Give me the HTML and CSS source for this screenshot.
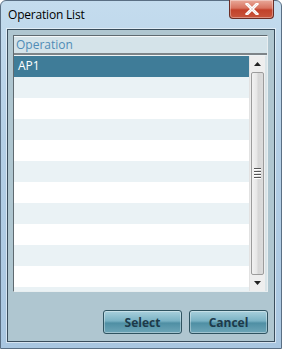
FILE: index.html
```html
<!DOCTYPE html>
<html>
<head>
<meta charset="utf-8">
<link rel="stylesheet" href="styles.css">
</head>
<body>
<div class="window">
  <div class="titlebar">
    <span class="title">Operation List</span>
    <div class="close">
      <svg width="16" height="12" viewBox="0 0 16 12"><path d="M3 1 L13 11 M13 1 L3 11" stroke="#fff" stroke-width="3" stroke-linecap="square" fill="none"/><path d="M3 1 L13 11 M13 1 L3 11" stroke="#6a2a20" stroke-width="0.5" fill="none" opacity="0.3"/></svg>
    </div>
  </div>
  <div class="client">
    <div class="list">
      <div class="header">Operation</div>
      <div class="body">
        <div class="rows">
          <div class="row sel">AP1</div>
          <div class="row alt"></div>
          <div class="row"></div>
          <div class="row alt"></div>
          <div class="row"></div>
          <div class="row alt"></div>
          <div class="row"></div>
          <div class="row alt"></div>
          <div class="row"></div>
          <div class="row alt"></div>
          <div class="row"></div>
          <div class="row alt"></div>
        </div>
        <div class="scrollbar">
          <div class="arrow">
            <svg width="7" height="4" viewBox="0 0 7 4"><path d="M0 4 L3.5 0 L7 4 Z" fill="#222"/></svg>
          </div>
          <div class="thumb">
            <div class="grip"><span></span><span></span><span></span><span></span></div>
          </div>
          <div class="arrow">
            <svg width="7" height="4" viewBox="0 0 7 4"><path d="M0 0 L3.5 4 L7 0 Z" fill="#222"/></svg>
          </div>
        </div>
      </div>
    </div>
    <div class="buttons">
      <button class="btn">Select</button>
      <button class="btn">Cancel</button>
    </div>
  </div>
</div>
</body>
</html>
```

FILE: styles.css
```css
html, body {
  margin: 0;
  padding: 0;
  background: #ffffff;
}
.window {
  width: 282px;
  height: 349px;
  box-sizing: border-box;
  border: 1px solid #5a6f84;
  border-radius: 6px 6px 0 0;
  background: linear-gradient(180deg, #c4dcee 0%, #b4cfe6 40%, #a9c6e0 100%);
  display: flex;
  flex-direction: column;
  font-family: "Open Sans", "Noto Sans", sans-serif;
}
.titlebar {
  height: 28px;
  display: flex;
  align-items: flex-start;
  justify-content: space-between;
  padding-left: 7px;
  padding-right: 7px;
}
.title {
  font-size: 12px;
  color: #000;
  margin-top: 7px;
  line-height: 14px;
  letter-spacing: -0.2px;
}
.close {
  width: 45px;
  height: 19px;
  margin-top: -1px;
  box-sizing: border-box;
  border: 1px solid #6b2d25;
  border-top: none;
  border-radius: 0 0 4px 4px;
  background: linear-gradient(180deg, #e9a99a 0%, #d8735f 45%, #c2412a 55%, #c8553c 100%);
  display: flex;
  align-items: center;
  justify-content: center;
  box-shadow: inset 0 0 0 1px rgba(255,255,255,0.35);
}
.client {
  margin: 0 6px 6px 6px;
  flex: 1;
  border: 1px solid #3a4d5c;
  box-shadow: 0 0 0 1px rgba(255,255,255,0.5);
  background: #afc6d0;
  display: flex;
  flex-direction: column;
  padding: 5px 6px 7px 5px;
}
.list {
  height: 257px;
  box-sizing: border-box;
  border: 1px solid #e8eef0;
  border-top: 1px solid #5f6a70;
  border-left: 1px solid #5f6a70;
  background: #d0dfe5;
  display: flex;
  flex-direction: column;
}
.header {
  height: 19px;
  box-sizing: border-box;
  border-top: 1px solid #f4f8f9;
  border-bottom: 2px solid #7d8488;
  background: #d4e3e9;
  color: #4f8cb6;
  font-size: 12px;
  line-height: 16px;
  padding-left: 2px;
}
.body {
  flex: 1;
  display: flex;
  overflow: hidden;
  background: #fff;
  border-top: 1px solid #eef3f5;
  border-right: 2px solid #d9e4e8;
}
.rows {
  flex: 1;
  overflow: hidden;
}
.row {
  height: 21px;
  background: #ffffff;
  font-size: 12px;
  line-height: 20px;
  padding-left: 4px;
}
.row.alt {
  background: #eaf2f5;
}
.row.sel {
  background: #3f7c98;
  color: #fff;
}
.scrollbar {
  width: 15px;
  display: flex;
  flex-direction: column;
  background: #eeeeee;
  border-left: 1px solid #e2e2e2;
}
.arrow {
  height: 16px;
  display: flex;
  align-items: center;
  justify-content: center;
}
.thumb {
  flex: 1;
  margin: 0 1px;
  box-sizing: border-box;
  border: 1px solid #9c9c9c;
  border-radius: 2px;
  background: linear-gradient(90deg, #f2f2f2 0%, #e6e6e6 45%, #d6d6d6 55%, #dcdcdc 100%);
  display: flex;
  align-items: center;
  justify-content: center;
}
.grip {
  display: flex;
  flex-direction: column;
  gap: 1px;
}
.grip span {
  width: 7px;
  height: 1px;
  background: #555;
  border-bottom: 1px solid #fff;
}
.buttons {
  flex: 1;
  display: flex;
  justify-content: flex-end;
  align-items: flex-end;
  gap: 7px;
}
.btn {
  width: 79px;
  height: 24px;
  margin: 0;
  padding: 0;
  border: 1px solid #2f5360;
  border-radius: 3px;
  background: linear-gradient(180deg, #a9d0dc 0%, #7ab2c4 45%, #4f8fa4 55%, #6ea6b8 100%);
  box-shadow: inset 0 0 0 1px rgba(255,255,255,0.35);
  font-family: "Open Sans", "Noto Sans", sans-serif;
  font-weight: bold;
  font-size: 12px;
  color: #1d3a4a;
}
```
